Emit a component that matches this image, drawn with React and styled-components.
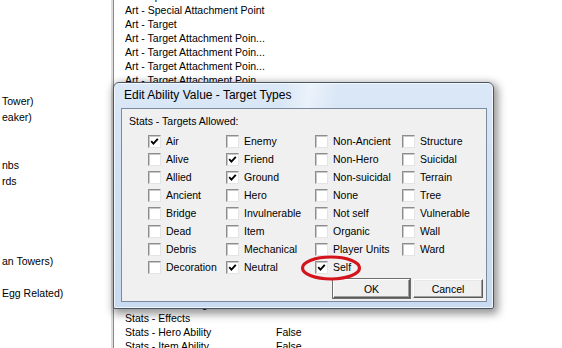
import React from 'react';
import styled, { createGlobalStyle } from 'styled-components';

const GlobalStyle = createGlobalStyle`
  html, body {
    margin: 0;
    padding: 0;
    background: #fff;
  }
  body {
    font-family: "Liberation Sans", Arial, sans-serif;
    font-size: 10.5px;
    color: #000;
    overflow: hidden;
  }
`;

const treeRows = [
  'Tower)', 'eaker)', '', '', 'nbs', 'rds', '', '', '', '', 'an Towers)', '', 'Egg Related)',
];

const fieldRows = [
  { name: 'Art - Special' },
  { name: 'Art - Special Attachment Point' },
  { name: 'Art - Target' },
  { name: 'Art - Target Attachment Poin...' },
  { name: 'Art - Target Attachment Poin...' },
  { name: 'Art - Target Attachment Poin...' },
  { name: 'Art - Target Attachment Poin...' },
  { name: 'Art - Target Attachments' },
  { name: 'Art - Tooltip - Learn' },
  { name: 'Art - Tooltip - Normal' },
  { name: 'Sound - Effect Sound' },
  { name: 'Sound - Effect Sound (Looping)' },
  { name: 'Stats - Area of Effect' },
  { name: 'Stats - Buffs' },
  { name: 'Stats - Casting Time' },
  { name: 'Stats - Check Dependencies' },
  { name: 'Stats - Cooldown' },
  { name: 'Stats - Duration - Hero' },
  { name: 'Stats - Duration - Normal' },
  { name: 'Stats - Mana Cost' },
  { name: 'Stats - Number of Levels' },
  { name: 'Stats - Targets Allowed' },
  { name: 'Stats - Cast Range' },
  { name: 'Stats - Effects' },
  { name: 'Stats - Hero Ability', value: 'False' },
  { name: 'Stats - Item Ability', value: 'False' },
];

const columns = [
  [['Air', true], ['Alive'], ['Allied'], ['Ancient'], ['Bridge'], ['Dead'], ['Debris'], ['Decoration']],
  [['Enemy'], ['Friend', true], ['Ground', true], ['Hero'], ['Invulnerable'], ['Item'], ['Mechanical'], ['Neutral', true]],
  [['Non-Ancient'], ['Non-Hero'], ['Non-suicidal'], ['None'], ['Not self'], ['Organic'], ['Player Units'], ['Self', true]],
  [['Structure'], ['Suicidal'], ['Terrain'], ['Tree'], ['Vulnerable'], ['Wall'], ['Ward']],
];

const CheckBox = ({ label, checked }) => (
  <Option>
    <Box>
      {checked && (
        <svg width="9" height="9" viewBox="0 0 9 9">
          <polyline points="1.2,4.2 3.4,6.6 7.8,1.8" fill="none" stroke="#000" strokeWidth="1.9" />
        </svg>
      )}
    </Box>
    <span>{label}</span>
  </Option>
);

const App = () => {
  return (
    <Page>
      <GlobalStyle />
      <TreePane>
        {treeRows.map((t, i) => (
          <TreeRow key={i}>{t}</TreeRow>
        ))}
      </TreePane>
      <FieldPane>
        <FieldList>
          {fieldRows.map((r, i) => (
            <FieldRow key={i}>
              <FieldName>{r.name}</FieldName>
              {r.value && <span>{r.value}</span>}
            </FieldRow>
          ))}
        </FieldList>
      </FieldPane>

      <Window>
        <TitleBar>Edit Ability Value - Target Types</TitleBar>
        <Client>
          <GroupLabel>Stats - Targets Allowed:</GroupLabel>
          <OptionsGrid>
            {columns.flat().map(([label, checked], i) => (
              <CheckBox key={i} label={label} checked={checked} />
            ))}
          </OptionsGrid>
          <ButtonRow>
            <Button $default $width={77}>OK</Button>
            <Button $width={70}>Cancel</Button>
          </ButtonRow>
        </Client>
      </Window>

      <Marker width="64" height="30" viewBox="0 0 64 30">
        <ellipse cx="32" cy="15" rx="28.5" ry="11" fill="none" stroke="#d3141d" strokeWidth="3.2" />
      </Marker>
    </Page>
  );
};

export default App;

const Page = styled.div`
  position: relative;
  display: flex;
  width: 562px;
  height: 348px;
  overflow: hidden;
  background: #fff;
`;

const TreePane = styled.div`
  width: 113px;
  flex: none;
  border-right: 2px solid #dcdcdc;
  padding-top: 93px;
  box-sizing: border-box;
  overflow: hidden;
`;

const TreeRow = styled.div`
  height: 16px;
  line-height: 16px;
  white-space: nowrap;
  padding-left: 2px;
`;

const FieldPane = styled.div`
  flex: 1;
  border-left: 1px solid #8a8a8a;
  padding-left: 11px;
  overflow: hidden;
`;

const FieldList = styled.div`
  margin-top: -11px;
`;

const FieldRow = styled.div`
  display: flex;
  height: 14px;
  line-height: 14px;
  white-space: nowrap;
`;

const FieldName = styled.span`
  width: 151px;
  flex: none;
`;

const Window = styled.div`
  position: absolute;
  left: 113px;
  top: 82px;
  width: 381px;
  box-sizing: border-box;
  border: 1px solid #4a5666;
  border-radius: 6px 6px 2px 2px;
  padding: 0 6px 6px 7px;
  background: linear-gradient(to bottom, #dbe8f7 0%, #d0e1f4 40%, #c9dbf0 100%);
  box-shadow: 2px 3px 9px 2px rgba(0, 0, 0, 0.42), inset 0 0 0 1px rgba(255, 255, 255, 0.7);
`;

const TitleBar = styled.div`
  height: 25px;
  line-height: 25px;
  font-size: 12px;
  margin-left: -6px;
  padding-left: 9px;
  background: linear-gradient(100deg, rgba(255,255,255,0) 0%, rgba(255,255,255,0) 45%, rgba(255,255,255,0.45) 52%, rgba(255,255,255,0) 60%);
  white-space: nowrap;
`;

const Client = styled.div`
  display: flex;
  flex-direction: column;
  height: 194px;
  box-sizing: border-box;
  border: 1px solid #7a8ba0;
  background: #f0f0f0;
  padding: 6px 3px 3px 7px;
`;

const GroupLabel = styled.div`
  height: 13px;
  line-height: 13px;
`;

const OptionsGrid = styled.div`
  display: grid;
  grid-template-columns: 78px 89px 87px 1fr;
  grid-template-rows: repeat(8, 18px);
  grid-auto-flow: column;
  margin-top: 4px;
  padding-left: 19px;
`;

const Option = styled.div`
  display: flex;
  align-items: center;
  gap: 5px;
  white-space: nowrap;
`;

const Box = styled.span`
  display: flex;
  align-items: center;
  justify-content: center;
  width: 13px;
  height: 13px;
  box-sizing: border-box;
  background: #fff;
  border: 1px solid;
  border-color: #8d8d8d #e4e4e4 #e4e4e4 #8d8d8d;
  box-shadow: inset 1px 1px 0 #c8c8c8;
`;

const ButtonRow = styled.div`
  display: flex;
  justify-content: flex-end;
  gap: 3px;
  margin-top: 3px;
`;

const Button = styled.button`
  width: ${(p) => p.$width}px;
  height: 19px;
  padding: 0;
  font-family: "Liberation Sans", Arial, sans-serif;
  font-size: 10.5px;
  color: #000;
  background: #f0f0f0;
  border: 1px solid;
  border-color: #ffffff #5a5a5a #5a5a5a #ffffff;
  box-shadow: ${(p) =>
    p.$default
      ? '0 0 0 1px #6e6e6e, inset -1px -1px 0 #a0a0a0'
      : 'inset -1px -1px 0 #a0a0a0, inset 1px 1px 0 #e8e8e8'};
`;

const Marker = styled.svg`
  position: absolute;
  left: 299px;
  top: 253px;
`;
